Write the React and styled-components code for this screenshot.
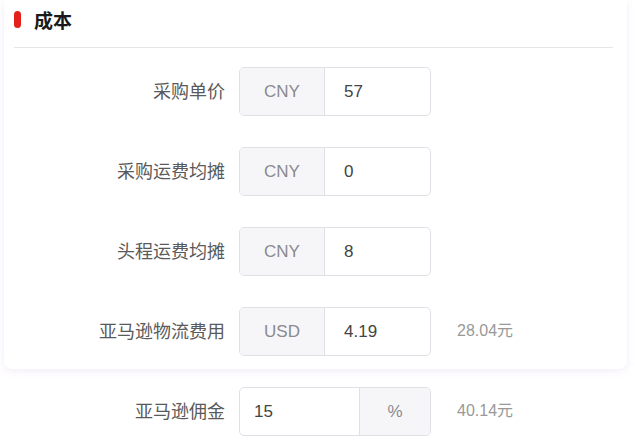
import React from 'react'
import styled, { createGlobalStyle } from 'styled-components'

const GlobalStyle = createGlobalStyle`
  body {
    margin: 0;
    background: #ffffff;
    font-family: "Liberation Sans", "Noto Sans CJK SC", sans-serif;
  }
`

const Page = styled.div`
  width: 635px;
  height: 445px;
  overflow: hidden;
  padding-left: 4px;
  box-sizing: border-box;
`

const Card = styled.div`
  width: 623px;
  background: #fff;
  border-radius: 0 0 8px 8px;
  box-shadow: 0 2px 8px rgba(215, 195, 228, 0.3);
  padding-bottom: 13px;
`

const Header = styled.div`
  display: flex;
  align-items: center;
  gap: 13px;
  height: 48px;
  margin: 0 14px 0 10px;
  border-bottom: 1px solid #e6e6e6;
  box-sizing: border-box;
  padding-bottom: 8px;
`

const Pill = styled.span`
  width: 7px;
  height: 17px;
  border-radius: 4px;
  background: #e3211a;
`

const Title = styled.h2`
  margin: 0;
  font-size: 19px;
  font-weight: 700;
  color: #1a1a1a;
`

const Rows = styled.div`
  display: flex;
  flex-direction: column;
  gap: 31px;
  padding-top: 19px;
`

const Row = styled.div`
  display: flex;
  align-items: center;
  height: 49px;
  margin-top: ${p => p.$top || 0}px;
`

const Label = styled.label`
  width: 221px;
  padding-right: 14px;
  padding-bottom: 3px;
  text-align: right;
  font-size: 18px;
  color: #5a5a5a;
`

const Group = styled.div`
  display: flex;
  width: 192px;
  height: 49px;
  border: 1px solid #dfe0e6;
  border-radius: 5px;
  box-sizing: border-box;
  overflow: hidden;
`

const Addon = styled.div`
  display: flex;
  align-items: center;
  justify-content: center;
  width: ${p => p.$w}px;
  flex-shrink: 0;
  background: #f6f6f9;
  color: #8a8a8f;
  font-size: 17px;
  ${p => (p.$side === 'right' ? 'border-left' : 'border-right')}: 1px solid #dfe0e6;
`

const Value = styled.div`
  flex: 1;
  display: flex;
  align-items: center;
  padding-left: ${p => p.$pad || 19}px;
  font-size: 17px;
  color: #444;
`

const Note = styled.span`
  margin-left: 26px;
  margin-bottom: 5px;
  font-size: 16px;
  color: #999;
`

const costRows = [
  { label: '采购单价', unit: 'CNY', value: '57' },
  { label: '采购运费均摊', unit: 'CNY', value: '0' },
  { label: '头程运费均摊', unit: 'CNY', value: '8' },
  { label: '亚马逊物流费用', unit: 'USD', value: '4.19', note: '28.04元' },
]

export default function App() {
  return (
    <Page>
      <GlobalStyle />
      <Card>
        <Header>
          <Pill />
          <Title>成本</Title>
        </Header>
        <Rows>
          {costRows.map(r => (
            <Row key={r.label}>
              <Label>{r.label}</Label>
              <Group>
                <Addon $w={84}>{r.unit}</Addon>
                <Value>{r.value}</Value>
              </Group>
              {r.note && <Note>{r.note}</Note>}
            </Row>
          ))}
        </Rows>
      </Card>
      <Row $top={18}>
        <Label>亚马逊佣金</Label>
        <Group>
          <Value $pad={14}>15</Value>
          <Addon $w={70} $side="right">%</Addon>
        </Group>
        <Note>40.14元</Note>
      </Row>
    </Page>
  )
}
